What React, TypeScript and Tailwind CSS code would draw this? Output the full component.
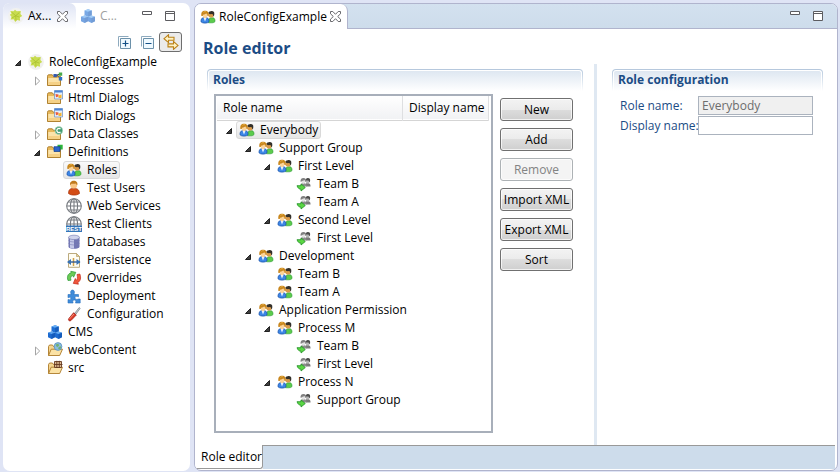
import React, { useState } from "react";
import type { ReactNode } from "react";

function Icon({ children, faded = false }: { children: ReactNode; faded?: boolean }) {
  return (
    <svg viewBox="0 0 16 16" aria-hidden="true" className={`size-4 shrink-0 ${faded ? "opacity-60" : ""}`}>
      {children}
    </svg>
  );
}

function PeopleIcon() {
  return (
    <Icon>
      <path d="M8.500 13.800c0-3 .6-4.500 2-5h2.800c1.300.5 1.800 1.800 1.700 3.800-.8.900-1.800 1.200-3.200 1.200z" fill="#5ccb4c" stroke="#2b9a35" strokeWidth=".6" />
      <circle cx="11" cy="6" r="2.600" fill="#d99a4a" />
      <path d="M8.300 4.500C8.400 2.800 9.600 2 11 2.200c2-.4 3.500.6 3.300 2.600 0 1.500-.3 2.200-.9 2.600-.3-1.300-.6-1.900-1.200-2.300-1.200.2-2.400.2-3.900-.6z" fill="#33302a" />
      <path d="M1 12.800c0-2.500.6-3.700 2.200-4.100h3.600c1.600.4 2.200 1.700 2.200 4.100-1 .9-2.200 1.300-4 1.300s-3-.4-4-1.300z" fill="#3b86e6" stroke="#1c55b0" strokeWidth=".8" />
      <path d="M3.500 8.700 5 12.500l1.600-3.800z" fill="#e8f2ff" />
      <path d="M1.400 7C.8 3.700 2.300 1.800 5 1.800s4.200 1.900 3.600 5.200z" fill="#c8861c" />
      <path d="M2.700 5.700c1.500.1 2.800-.4 3.600-1.400.2.700.7 1.200 1.400 1.500C7.500 8 6.500 9.300 5.100 9.300S2.800 8 2.700 5.700z" fill="#fcd49a" />
      <path d="M3.500 3.300c.8-.7 1.800-.8 2.600-.5" fill="none" stroke="#eebb55" strokeWidth=".8" />
    </Icon>
  );
}

function MemberIcon() {
  return (
    <Icon>
      <path d="M10 10.500V7.300h2.700c1.300.4 1.900 1.500 1.800 3.200z" fill="#7a7a7a" />
      <circle cx="11.700" cy="5.200" r="2.100" fill="#b5b5b5" />
      <path d="M9.500 4.500c.1-1.700 1.100-2.700 2.500-2.500 1.700 0 2.400 1.200 2.100 3.200l-.6 1.100-1-1.800z" fill="#4c4c4c" />
      <path d="M4.500 10.500c0-2 .6-3 1.900-3.200h2.200c1.400.2 1.900 1.200 1.900 3.200z" fill="#8d8d8d" />
      <path d="M4.600 5.800C4.200 3.300 5.300 1.900 7.400 1.900s3.300 1.400 2.700 3.900z" fill="#808080" />
      <path d="M5.500 5c1.200 0 2.100-.3 2.800-1l1 1.100c-.1 1.600-.9 2.700-1.900 2.700S5.600 6.700 5.500 5z" fill="#e2e2e2" />
      <path d="M1 9.700h4V7.900l4.300 3.600L5 15v-1.800c-2 0-3.200-1.200-4-3.500z" fill="#5bd644" stroke="#1f8f24" strokeWidth=".8" />
    </Icon>
  );
}

function LeafIcon() {
  return (
    <Icon>
      <circle cx="8" cy="8" r="7.900" fill="#f1f1ef" />
      <path d="m2.300 3 3.200.3L7 1.700l1.800 1.600 4-.3-.4 2.900 1.800 2-2.400 1.600.3 3.300-3-.8L7.300 14l-1.700-2.700-3 .2.900-2.700-1.700-2.100 1.700-1z" fill="#c8dc50" />
      <path d="m4 4.500 3.700 3.200 3.600-3M4 10l3.700-2.300.3 4.800M7.700 7.700l3.800 1.500" fill="none" stroke="#a9c02f" strokeWidth=".8" />
    </Icon>
  );
}

function CubesIcon({ faded = false }: { faded?: boolean }) {
  return (
    <Icon faded={faded}>
      <path d="m4.500 2.500 3.600-1.200 3.700 1.200v4.700L8.100 8.800 4.500 7.200z" fill="#1f6fd4" />
      <path d="m4.500 2.500 3.600-1.200 3.700 1.200-3.700 1.300z" fill="#66aef5" />
      <path d="m1 8.800 3.600-1.300 3.400 1.300v4.500l-3.400 1.600L1 13.300z" fill="#1c6ad0" />
      <path d="m1 8.800 3.600-1.300L8 8.800l-3.400 1.300z" fill="#5ea6f0" />
      <path d="m8 8.800 3.500-1.300L15 8.800v4.500l-3.500 1.600L8 13.300z" fill="#1c6ad0" />
      <path d="m8 8.800 3.500-1.300L15 8.800l-3.500 1.300z" fill="#66aef5" />
      <path d="M8.100 3.800 11.800 2.500v4.700L8.100 8.800zM4.600 10.100 8 8.800v4.500l-3.400 1.600zM11.500 10.100 15 8.800v4.500l-3.500 1.600z" fill="#0f51ae" fillOpacity=".6" />
    </Icon>
  );
}

function FolderIcon({ badge }: { badge: "process" | "dialog" | "class" | "definition" }) {
  return (
    <Icon>
      <path d="M.5 13.500V4.300c0-1 .5-1.500 1.300-1.500h3.500l1.200 1.500h7v9.200z" fill="#e8b95b" stroke="#a87722" strokeWidth=".9" />
      <path d="M1.200 13V6h11.600v7z" fill="#fbe3aa" />
      <path d="M1.200 13v-3h11.600v3z" fill="#f5d187" />
      {badge === "process" && (
        <>
          <path d="M8 3.500h3l2-2M11 4l2 2.500" stroke="#555" strokeWidth=".7" />
          <path d="M6.500 2h3.300v3.300H6.500z" fill="#3158b0" />
          <path d="M11.800.5h3.400v3.300h-3.400z" fill="#47a849" />
          <path d="M11.800 5h3.400v3.500h-3.400z" fill="#2d70c8" />
        </>
      )}
      {badge === "dialog" && (
        <>
          <path d="M7.500.5h8v8.500h-8z" fill="#e3effc" stroke="#7b98c5" strokeWidth=".8" />
          <path d="M7.500.5h8v2h-8z" fill="#4a83d5" />
          <path d="m8.500 4 3 .5v2l-2.500.7z" fill="#ee5b3a" />
          <path d="m11.500 5.500 3-1V8h-3z" fill="#f6b52f" />
        </>
      )}
      {badge === "class" && (
        <>
          <circle cx="11.800" cy="4.500" r="3.900" fill="#3f9b70" stroke="#bfe0cd" strokeWidth=".6" />
          <path d="M13.500 3.100a2.100 2.100 0 1 0 0 2.800" fill="none" stroke="#fff" strokeWidth="1.200" />
        </>
      )}
      {badge === "definition" && (
        <>
          <path d="M10.500.8h5.200v4.700h-5.200z" fill="#2db63b" />
          <path d="M7 2.700h6v4.800H7z" fill="#2c66cc" stroke="#123c8b" strokeWidth=".7" />
        </>
      )}
    </Icon>
  );
}

function OpenFolderIcon({ badge }: { badge: "web" | "package" }) {
  return (
    <Icon>
      <path d="M1.500 13.500v-9L2.500 3h3l1 1.500h6.800v3" fill="#f5d58f" stroke="#ad7a29" strokeWidth=".9" />
      <path d="m1.500 13.500 2.700-6.300h11.300l-2.800 6.300z" fill="#fbe2a5" stroke="#ad7a29" strokeWidth=".9" />
      {badge === "web" ? (
        <>
          <circle cx="11" cy="4.500" r="3.900" fill="#8bbbe0" stroke="#4e89b9" strokeWidth=".7" />
          <path d="m8.500 2.500 3-.7.5 2-2 1.500zM11 6l2.500-2 .7 2L12 7.700z" fill="#70b070" />
        </>
      ) : (
        <path d="M7.500 1.500h7v6h-7zM7 4.500h8.500M9.800.8V8M12.300.8V8" fill="#dbb890" stroke="#663a20" strokeWidth=".9" />
      )}
    </Icon>
  );
}

function UserIcon() {
  return (
    <Icon>
      <path d="M2.500 13.500c0-3 .8-4.700 3.500-5h3.500c2.600.3 3.800 1.900 4 5-1.700 1.200-3.500 1.600-5.500 1.600s-4-.4-5.500-1.600z" fill="#d34d16" stroke="#a7340c" strokeWidth=".7" />
      <circle cx="7.700" cy="5" r="3.500" fill="#f9c685" />
      <path d="M4.200 5.300C3.500 2.500 5.300.8 7.800.8s4.200 1.700 3.500 4.300c-.8-.2-1-.8-1.300-1.600-2 .6-3.500.2-4.600.3z" fill="#bf7a1d" />
    </Icon>
  );
}

function GlobeIcon({ rest = false }: { rest?: boolean }) {
  return (
    <Icon>
      <g fill="none" stroke="#777b80" strokeWidth="1.100">
        <circle cx="8" cy="8" r="7.300" />
        <ellipse cx="8" cy="8" rx="3.600" ry="7.300" />
        <path d="M8 .7v14.600M.7 8h14.600M2 4h12M2 12h12" />
      </g>
      {rest && (
        <>
          <path d="M0 9.500h16V16H0z" fill="#3474b8" />
          <text x="8" y="15" textAnchor="middle" fontSize="6" fontWeight="700" fill="#fff" fontFamily="Liberation Sans, sans-serif">REST</text>
        </>
      )}
    </Icon>
  );
}

function DatabaseIcon() {
  return (
    <Icon>
      <path d="M2.500 3.500v9.300c0 2.700 11 2.700 11 0V3.500z" fill="#7377b4" />
      <path d="M4 4.500v9.200c1.300.7 3 .8 4 .7V5z" fill="#c5c9e8" />
      <ellipse cx="8" cy="3.400" rx="5.500" ry="2.200" fill="#d1d4ec" stroke="#8185b8" strokeWidth=".7" />
      <path d="M2.500 6.500c1.800 2 9.200 2 11 0M2.500 9.500c1.800 2 9.200 2 11 0" fill="none" stroke="#7a7eb5" strokeWidth=".6" />
    </Icon>
  );
}

function PersistenceIcon() {
  return (
    <Icon>
      <path d="M2.500 1.500h8l3 3v10.800h-11z" fill="#fffdf3" stroke="#b4a171" strokeWidth=".9" />
      <path d="M10.500 1.500v3h3z" fill="#ecd18b" stroke="#b4a171" strokeWidth=".7" />
      <path d="M7.500 6v8" stroke="#cfa14a" strokeWidth="1.500" />
      <path d="M2 10h12" stroke="#24518f" strokeWidth="1.300" />
      <path d="M5 7v6l-4-3zM10.500 7v6l4-3z" fill="#3972b3" />
    </Icon>
  );
}

function OverrideIcon() {
  return (
    <Icon>
      <path d="M2 10.500C.6 6.500 2 3.500 5.200 2.800L4.800 1.300l5 1-2.200 4.900-.9-1.700C4.800 6 4.200 7.800 5 10.200z" fill="#6cca56" stroke="#2a9a35" strokeWidth=".7" />
      <path d="M11 4.500 13.800 4c1.500 3.700.8 7-2 8.500l.6 1.700-5.100-.8 2-4.900 1 1.800c1.200-.8 1.500-2.800.7-5.800z" fill="#f0573c" stroke="#c22b1b" strokeWidth=".7" />
    </Icon>
  );
}

function PuzzleIcon() {
  return (
    <Icon>
      <path d="M2 6.500h3.300C4 4.300 4.700 2 6.500 2s2.600 2.300 1.300 4.500h4.700v2.300c-2.200-1-3.500-.4-3.500 1s1.300 2.200 3.500 1.200h1.700v4H9.500c.8-2 .2-3-1.200-3s-2 1-1.200 3H2v-3.500c2 .6 2.800.1 2.800-1S4 9 2 9.700z" fill="#3f8cda" stroke="#2871bd" strokeWidth=".6" />
    </Icon>
  );
}

function ScrewdriverIcon() {
  return (
    <Icon>
      <path d="m8.500 7.500 4.700-6 1 .8-4.500 6.200z" fill="#cad0d4" stroke="#707c82" strokeWidth=".7" />
      <path d="M7.600 6.700 10.300 9 5 14.500c-1.300 1.300-3.400-.3-2.200-1.900z" fill="#dc3928" stroke="#9d2218" strokeWidth=".7" />
      <path d="m8 8-4.500 5" stroke="#f69a83" strokeWidth=".9" />
    </Icon>
  );
}

function CloseIcon() {
  return (
    <svg viewBox="0 0 11 11" aria-hidden="true" className="size-[11px]">
      <path d="M.5.5h2.300l2.700 2.800L8.200.5h2.300v2.300L7.700 5.500l2.800 2.700v2.300H8.200L5.500 7.700l-2.700 2.800H.5V8.200l2.800-2.700L.5 2.800z" fill="#fff" stroke="#68686c" />
    </svg>
  );
}

function WindowButtons() {
  return (
    <>
      <button type="button" aria-label="Minimize" className="size-[11px]">
        <svg viewBox="0 0 11 11" aria-hidden="true" className="size-[11px]">
          <path d="M.5.5h9v3h-9z" fill="#fff" stroke="#5c5c60" />
        </svg>
      </button>
      <button type="button" aria-label="Maximize" className="size-[11px]">
        <svg viewBox="0 0 11 11" aria-hidden="true" className="size-[11px]">
          <path d="M.5.5h9v9h-9zM.5 2.500h9" fill="#fff" stroke="#5c5c60" />
        </svg>
      </button>
    </>
  );
}

function Twisty({ state }: { state?: "open" | "closed" }) {
  return (
    <svg viewBox="0 0 13 16" aria-hidden="true" className="h-4 w-[13px] shrink-0">
      {state === "open" && <path d="M8.500 6.500v5h-5z" fill="#404040" stroke="#222" />}
      {state === "closed" && <path d="m4.500 5 4.200 4-4.200 4z" fill="#fff" stroke="#a5a5a5" />}
    </svg>
  );
}

const indents = ["pl-0", "pl-[19px]", "pl-[38px]", "pl-[57px]"];

interface Node {
  level: number;
  label: string;
  icon: ReactNode;
  state?: "open" | "closed";
}

function TreeItem({ node, selected, onSelect }: { node: Node; selected: boolean; onSelect: () => void }) {
  return (
    <div className={`flex h-[18px] items-center ${indents[node.level]}`}>
      <Twisty state={node.state} />
      <button
        type="button"
        onClick={onSelect}
        className={`flex h-[18px] items-center gap-[5px] rounded-[3px] border px-[2px] whitespace-nowrap ${
          selected ? "border-[#d9d9d9] bg-linear-to-b from-[#fafafa] to-[#e6e6e6]" : "border-transparent"
        }`}
      >
        {node.icon}
        <span>{node.label}</span>
      </button>
    </div>
  );
}

const projectNodes: Node[] = [
  { level: 0, label: "RoleConfigExample", icon: <LeafIcon />, state: "open" },
  { level: 1, label: "Processes", icon: <FolderIcon badge="process" />, state: "closed" },
  { level: 1, label: "Html Dialogs", icon: <FolderIcon badge="dialog" /> },
  { level: 1, label: "Rich Dialogs", icon: <FolderIcon badge="dialog" /> },
  { level: 1, label: "Data Classes", icon: <FolderIcon badge="class" />, state: "closed" },
  { level: 1, label: "Definitions", icon: <FolderIcon badge="definition" />, state: "open" },
  { level: 2, label: "Roles", icon: <PeopleIcon /> },
  { level: 2, label: "Test Users", icon: <UserIcon /> },
  { level: 2, label: "Web Services", icon: <GlobeIcon /> },
  { level: 2, label: "Rest Clients", icon: <GlobeIcon rest /> },
  { level: 2, label: "Databases", icon: <DatabaseIcon /> },
  { level: 2, label: "Persistence", icon: <PersistenceIcon /> },
  { level: 2, label: "Overrides", icon: <OverrideIcon /> },
  { level: 2, label: "Deployment", icon: <PuzzleIcon /> },
  { level: 2, label: "Configuration", icon: <ScrewdriverIcon /> },
  { level: 1, label: "CMS", icon: <CubesIcon /> },
  { level: 1, label: "webContent", icon: <OpenFolderIcon badge="web" />, state: "closed" },
  { level: 1, label: "src", icon: <OpenFolderIcon badge="package" /> },
];

const roleNodes: Node[] = [
  { level: 0, label: "Everybody", icon: <PeopleIcon />, state: "open" },
  { level: 1, label: "Support Group", icon: <PeopleIcon />, state: "open" },
  { level: 2, label: "First Level", icon: <PeopleIcon />, state: "open" },
  { level: 3, label: "Team B", icon: <MemberIcon /> },
  { level: 3, label: "Team A", icon: <MemberIcon /> },
  { level: 2, label: "Second Level", icon: <PeopleIcon />, state: "open" },
  { level: 3, label: "First Level", icon: <MemberIcon /> },
  { level: 1, label: "Development", icon: <PeopleIcon />, state: "open" },
  { level: 2, label: "Team B", icon: <PeopleIcon /> },
  { level: 2, label: "Team A", icon: <PeopleIcon /> },
  { level: 1, label: "Application Permission", icon: <PeopleIcon />, state: "open" },
  { level: 2, label: "Process M", icon: <PeopleIcon />, state: "open" },
  { level: 3, label: "Team B", icon: <MemberIcon /> },
  { level: 3, label: "First Level", icon: <MemberIcon /> },
  { level: 2, label: "Process N", icon: <PeopleIcon />, state: "open" },
  { level: 3, label: "Support Group", icon: <MemberIcon /> },
];

function SectionHeader({ children }: { children: ReactNode }) {
  return (
    <div className="rounded-t-[4px] bg-linear-to-b from-[#b4c7dc] to-white px-px pt-px">
      <h2 className="h-[21px] rounded-t-[3px] border-x border-t border-white bg-linear-to-b from-[#dee7f1] to-white px-1 text-[12px] leading-[18px] font-bold text-[#1b4c85]">
        {children}
      </h2>
    </div>
  );
}

function ProjectView() {
  const [selected, setSelected] = useState(6);
  return (
    <aside className="flex w-[187px] shrink-0 flex-col overflow-hidden rounded-[7px] bg-white">
      <div className="flex h-[26px]">
        <div className="flex w-[73px] items-center rounded-tr-[7px] bg-linear-to-b from-[#dfe4f4] to-white pl-[5px]">
          <LeafIcon />
          <span className="w-[28px] pl-1">Ax...</span>
          <button type="button" aria-label="Close view" className="ml-[5px]"><CloseIcon /></button>
        </div>
        <div className="flex items-center gap-1 pl-[4px] text-[#a0a0a0]">
          <CubesIcon faded />
          <span>C...</span>
        </div>
        <div className="ml-auto flex gap-[12px] pt-[8px] pr-[14px]"><WindowButtons /></div>
      </div>
      <div className="flex h-[24px] items-center justify-end gap-[4px] pt-px pr-[8px]">
        <div className="flex gap-[7px]">
          {["Expand all", "Collapse all"].map((name, index) => (
            <button key={name} type="button" aria-label={name}>
              <Icon>
                <path d="M2.500 12.500v-10h10" fill="none" stroke="#8eaabe" />
                <path d="M4.500 4.500h10v10h-10z" fill="#eff9ff" stroke="#6c91aa" />
                <path d={index === 0 ? "M6.500 9.500h6M9.500 6.500v6" : "M6.500 9.500h6"} stroke="#124f86" strokeWidth="1.200" />
              </Icon>
            </button>
          ))}
        </div>
        <button type="button" aria-label="Link with editor" className="flex h-[20px] w-[23px] items-center justify-center rounded-[3px] border border-[#6e6e6e] bg-[#ebebeb]">
          <Icon>
            <path d="M5.500.8v2.400H11v3H5.500v2.400L1 4.700z" fill="#fff3c4" stroke="#bb8219" strokeWidth="1.100" />
            <path d="M10.500 7.500v2.400H5v3h5.500v2.400l4.500-3.900z" fill="#fff3c4" stroke="#bb8219" strokeWidth="1.100" />
          </Icon>
        </button>
      </div>
      <nav aria-label="Project" className="pl-[9px]">
        {projectNodes.map((node, index) => (
          <TreeItem key={index} node={node} selected={index === selected} onSelect={() => setSelected(index)} />
        ))}
      </nav>
    </aside>
  );
}

function RoleTable() {
  const [selected, setSelected] = useState(0);
  return (
    <div className="min-w-0 flex-1 border-2 border-[#a8afba] bg-white pr-[2px] pl-px">
      <table className="w-full table-fixed border-collapse">
        <thead>
          <tr className="h-[24px] border-b border-[#d5d5d5] bg-linear-to-b from-white to-[#f1f2f4] text-left">
            <th className="border-r border-[#dedfe1] px-[6px] font-normal">Role name</th>
            <th className="w-[86px] border-r border-[#dedfe1] pl-[6px] font-normal whitespace-nowrap">Display name</th>
          </tr>
        </thead>
        <tbody>
          <tr className="h-px"><td colSpan={2} /></tr>
          {roleNodes.map((node, index) => (
            <tr key={index}>
              <td className="p-0 pl-[6px]">
                <TreeItem node={node} selected={index === selected} onSelect={() => setSelected(index)} />
              </td>
              <td />
            </tr>
          ))}
        </tbody>
      </table>
    </div>
  );
}

function RoleActions() {
  return (
    <div className="flex w-[73px] shrink-0 flex-col gap-[7px] pt-[4px]">
      {["New", "Add", "Remove", "Import XML", "Export XML", "Sort"].map((name) => (
        <button
          key={name}
          type="button"
          disabled={name === "Remove"}
          className="h-[23px] rounded-[3px] border border-[#707070] bg-[linear-gradient(#f3f3f3,#ebebeb_50%,#dddddd_50%,#cfcfcf)] whitespace-nowrap inset-ring inset-ring-white/70 disabled:border-[#adb2b5] disabled:bg-[#f4f4f4] disabled:bg-none disabled:text-[#838383]"
        >
          {name}
        </button>
      ))}
    </div>
  );
}

function RoleForm() {
  return (
    <form className="flex flex-col gap-px pt-[5px] pr-[10px] pl-[8px] text-[#1b4c85]">
      <div className="flex h-[19px] items-center">
        <label htmlFor="role-name" className="w-[78px] shrink-0">Role name:</label>
        <input id="role-name" readOnly defaultValue="Everybody" className="h-[19px] min-w-0 flex-1 border border-[#abb3be] bg-[#f0f0f0] px-[3px] text-[#6d6d6d]" />
      </div>
      <div className="flex h-[19px] items-center">
        <label htmlFor="display-name" className="w-[78px] shrink-0 whitespace-nowrap">Display name:</label>
        <input id="display-name" className="h-[19px] min-w-0 flex-1 border border-[#abb3be] bg-white px-[3px] text-black" />
      </div>
    </form>
  );
}

function Editor() {
  return (
    <main className="flex min-w-0 flex-1 flex-col overflow-hidden rounded-[7px] border border-[#b0b4cd] bg-white">
      <div className="flex h-[25px] bg-linear-to-b from-[#d3e1ef] to-[#cddceb]">
        <div className="flex items-center rounded-tr-[7px] border-r border-[#b0b4cd] bg-white pr-[6px] pl-[5px]">
          <PeopleIcon />
          <span className="w-[114px] pl-[3px]">RoleConfigExample</span>
          <button type="button" aria-label="Close editor"><CloseIcon /></button>
        </div>
        <div className="flex flex-1 justify-end gap-[12px] border-b border-[#b0b4cd] pt-[7px] pr-[13px]"><WindowButtons /></div>
      </div>
      <h1 className="h-[35px] pl-[8px] text-[16px] leading-[38px] font-bold text-[#1b4c85]">Role editor</h1>
      <div className="grid flex-1 grid-cols-[399fr_3px_240fr]">
        <section className="flex min-w-0 flex-col pt-[5px] pr-[11px] pb-[12px] pl-[12px]">
          <SectionHeader>Roles</SectionHeader>
          <div className="flex flex-1 gap-[7px] pt-[3px] pr-[10px] pl-[7px]">
            <RoleTable />
            <RoleActions />
          </div>
        </section>
        <div className="bg-[#dfe8f2]" />
        <section className="min-w-0 pt-[5px] pr-[14px] pl-[15px]">
          <SectionHeader>Role configuration</SectionHeader>
          <RoleForm />
        </section>
      </div>
      <div className="flex h-[24px] pr-[2px]">
        <button type="button" className="rounded-br-[3px] border-r border-b border-[#999] bg-white pl-[6px] whitespace-nowrap">Role editor</button>
        <div className="flex-1 border-t border-[#999] bg-[#cddceb]" />
      </div>
      <div className="h-px" />
    </main>
  );
}

export default function App() {
  return (
    <div className="flex min-h-screen gap-[4px] bg-[#dfe4f5] pt-[3px] pr-[2px] pb-px pl-[3px] font-['Open_Sans','Noto_Sans',sans-serif] text-[12px] leading-[16px] text-black">
      <ProjectView />
      <Editor />
    </div>
  );
}
